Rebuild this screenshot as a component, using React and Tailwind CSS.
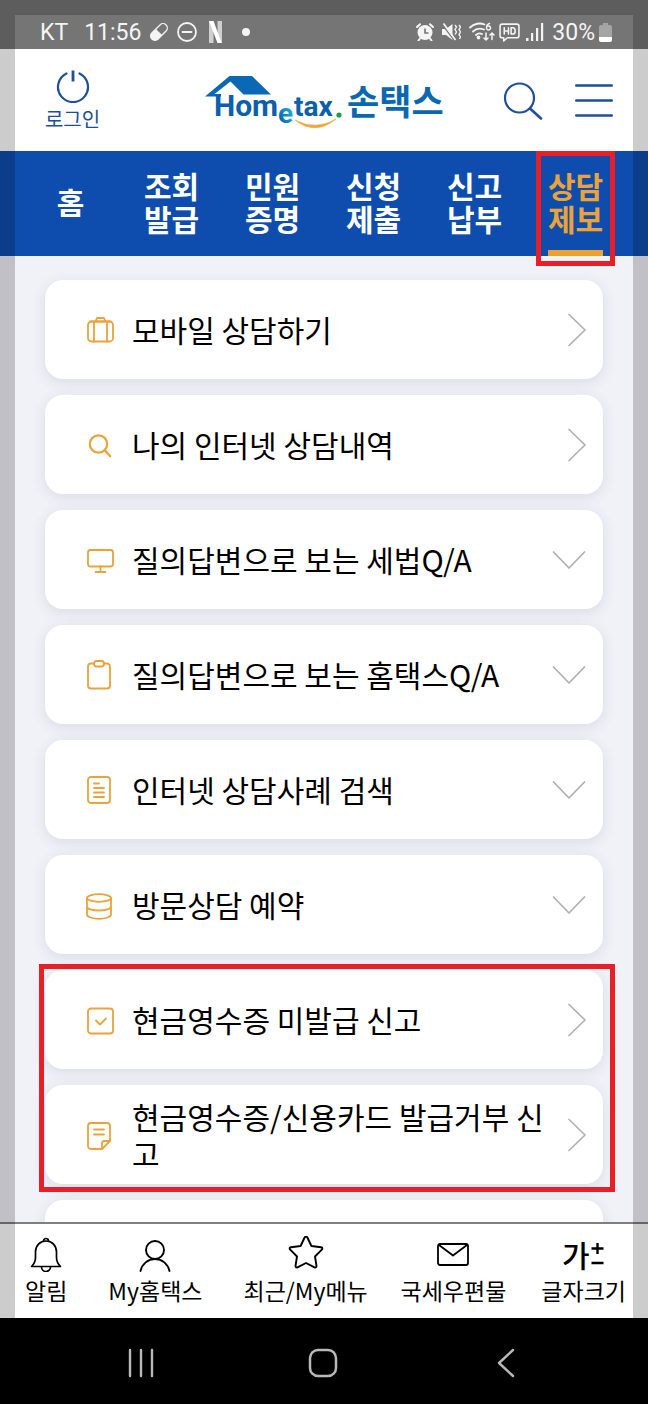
import React, { useState } from 'react'

const iconProps = {
  fill: 'none',
  stroke: 'currentColor',
  strokeLinecap: 'round',
  strokeLinejoin: 'round',
  'aria-hidden': true
}

const MenuIcon = ({ children }) => (
  <svg viewBox="0 0 28 30" strokeWidth="1.8" {...iconProps} className="w-7 h-[30px] flex-shrink-0 text-[#e9a33a]">
    {children}
  </svg>
)

const icons = {
  briefcase: (
    <>
      <rect x="2" y="6.5" width="25" height="20" rx="3.5" />
      <path d="M8 6.5v20M21 6.5v20M4 6.5h21M9.5 6.5L11 3h7l1.500 3.500" />
    </>
  ),
  search: (
    <>
      <circle cx="12.5" cy="14" r="8.7" strokeWidth="2.2" />
      <path d="M19 20.5l5 5.500" strokeWidth="2.4" />
    </>
  ),
  monitor: (
    <>
      <rect x="2" y="5" width="25" height="16.5" rx="2.5" />
      <path d="M14.5 21.5V27M9.500 27h10" />
    </>
  ),
  clipboard: (
    <>
      <path d="M7.5 3.500H5a3 3 0 0 0-3 3v19a3 3 0 0 0 3 3h16a3 3 0 0 0 3-3v-19a3 3 0 0 0-3-3h-2.500" />
      <rect x="8" y="1" width="10" height="5.5" rx="2.5" />
    </>
  ),
  document: (
    <>
      <rect x="2" y="2" width="22" height="26" rx="3" />
      <path d="M8 8.500h5M8 13h10M8 17.500h10M8 22h10" />
    </>
  ),
  database: (
    <>
      <ellipse cx="13" cy="8" rx="12" ry="3.8" />
      <path d="M1 8v16.500c0 2.300 5 4.300 12 4.300s12-2 12-4.300V8M1 16.500c0 2.200 5 4 12 4s12-1.800 12-4" />
    </>
  ),
  check: (
    <>
      <rect x="2" y="3.5" width="25" height="25" rx="3" />
      <path d="M10 15.500l4 4 6-6" />
    </>
  ),
  note: (
    <>
      <path d="M16 29H5a3 3 0 0 1-3-3V6a3 3 0 0 1 3-3h16a3 3 0 0 1 3 3v15z" />
      <path d="M24 21h-5.500a2.500 2.500 0 0 0-2.500 2.500V29M8 9.500h10M8 14.500h10" />
    </>
  )
}

const tabs = ['홈', '조회\n발급', '민원\n증명', '신청\n제출', '신고\n납부', '상담\n제보']

const menuItems = [
  { icon: 'briefcase', label: '모바일 상담하기', type: 'link' },
  { icon: 'search', label: '나의 인터넷 상담내역', type: 'link' },
  { icon: 'monitor', label: '질의답변으로 보는 세법Q/A', type: 'group' },
  { icon: 'clipboard', label: '질의답변으로 보는 홈택스Q/A', type: 'group' },
  { icon: 'document', label: '인터넷 상담사례 검색', type: 'group' },
  { icon: 'database', label: '방문상담 예약', type: 'group' }
]

const reportItems = [
  { icon: 'check', label: '현금영수증 미발급 신고', type: 'link' },
  { icon: 'note', label: '현금영수증/신용카드 발급거부 신고', type: 'link' }
]

const StatusBar = () => (
  <div className="flex items-center justify-between h-[49px] pt-[15px] pl-10 pr-9 bg-[#757575] text-[#f4f4f4] font-[Roboto,sans-serif] text-[23px] leading-none flex-shrink-0">
    <div className="flex items-center">
      <span>KT</span>
      <span className="ml-4">11:56</span>
      <svg viewBox="0 0 20 20" className="ml-2 w-5 h-5" aria-hidden="true">
        <g transform="rotate(-45 10 10)">
          <rect x="0" y="5.7" width="20" height="8.6" rx="4.3" fill="none" stroke="currentColor" strokeWidth="1.3" />
          <path d="M10 5.300H4.500a4.700 4.700 0 0 0 0 9.400H10z" fill="currentColor" />
        </g>
      </svg>
      <svg viewBox="0 0 20 20" strokeWidth="1.8" {...iconProps} className="ml-2 w-5 h-5">
        <circle cx="10" cy="10" r="9" />
        <path d="M5.500 10h9" />
      </svg>
      <svg viewBox="0 0 13 22" className="ml-3 w-[13px] h-[22px]" aria-hidden="true">
        <path d="M0 0h4.500v22l-4.500.5zM8.500 0H13v22.500L8.500 22z" fill="#cfcfcf" />
        <path d="M0 0h4.500L13 22.500 8.500 22z" fill="#fff" />
      </svg>
      <span className="ml-5 w-2 h-2 rounded-full bg-[#f4f4f4]" />
    </div>
    <div className="flex items-center">
      <svg viewBox="0 0 18 18" className="w-[18px] h-[18px]" aria-hidden="true">
        <circle cx="9" cy="9.5" r="7.5" fill="currentColor" />
        <path d="M1 4l3-2.800M17 4l-3-2.800M4 15.500l-1.500 2M14 15.500l1.500 2" stroke="currentColor" strokeWidth="2" strokeLinecap="round" />
        <path d="M9 5.500V10h3.500" fill="none" stroke="#757575" strokeWidth="1.6" />
      </svg>
      <svg viewBox="0 0 19 18" className="ml-2 w-[19px] h-[18px]" aria-hidden="true">
        <path d="M0 6h4l6.500-5v16L4 12H0z" fill="currentColor" />
        <path d="M0 1l12 16" stroke="#757575" strokeWidth="1.4" />
        <path d="M1.500.5l12 16.500" stroke="currentColor" strokeWidth="1.8" />
        <path d="M13 2l1.500 2L13 6.500 14.500 9 13 11.500M17 2l1.500 2L17 6.500 18.500 9 17 11.500l1.500 2.500-1 2" fill="none" stroke="currentColor" strokeWidth="1.4" />
      </svg>
      <svg viewBox="0 0 26 20" strokeWidth="1.8" {...iconProps} className="ml-2 w-[26px] h-5">
        <path d="M1 5.500C5 1.500 11 .5 15.500 2.500M4 9.500c3-3 7-3.500 11-2M7 13c1.500-1.500 4-2 6-1" />
        <circle cx="9.5" cy="15.5" r="1" fill="currentColor" />
        <path d="M20.500 1.500c-2 .5-3 2-3 4.500a2 2 0 1 0 1.500-2" strokeWidth="1.5" />
        <path d="M17 11v7M15 16l2 2 2-2M23 17.500V11M21 13l2-2 2 2" strokeWidth="1.5" />
      </svg>
      <svg viewBox="0 0 20 18" strokeWidth="1.5" {...iconProps} className="ml-1 w-[21px] h-[19px]">
        <path d="M3 1h14a2 2 0 0 1 2 2v9a2 2 0 0 1-2 2H8l-3.500 3V14H3a2 2 0 0 1-2-2V3a2 2 0 0 1 2-2z" />
        <path d="M5 4.500v6M9 4.500v6M5 7.500h4M11.500 4.500v6H13c3.200 0 3.200-6 0-6z" />
      </svg>
      <svg viewBox="0 0 18 18" className="ml-1.5 w-[18px] h-[18px]" fill="currentColor" aria-hidden="true">
        <path d="M0 15h2.500v3H0zM5 10h2.200v8H5zM10 5h2.200v13H10zM15 0h2.200v18H15z" />
      </svg>
      <span className="ml-2">30%</span>
      <svg viewBox="0 0 13 19" className="ml-1 w-[13px] h-[19px]" aria-hidden="true">
        <path d="M4 0h5v2h2a2 2 0 0 1 2 2v10H0V4a2 2 0 0 1 2-2h2z" fill="#a5a5a5" />
        <path d="M0 14h13v3a2 2 0 0 1-2 2H2a2 2 0 0 1-2-2z" fill="#fff" />
      </svg>
    </div>
  </div>
)

const Logo = () => (
  <svg viewBox="0 -4 250 62" className="w-[250px] h-[62px]" role="img" aria-label="Hometax 손택스">
    <defs>
      <linearGradient id="logo-e" x1="0" y1="1" x2="1" y2="0">
        <stop offset="0.2" stopColor="#0a63ae" />
        <stop offset="0.8" stopColor="#1cb4dc" />
      </linearGradient>
    </defs>
    <path d="M5 23.500L29.500 3H52l19 18.500H43.500L30.500 8.500 14.500 21H21v2.500z" fill="#0a68b4" />
    <g fontFamily="Roboto, sans-serif" fontWeight="700" fill="#0a60ac">
      <text x="14" y="43" fontSize="30">Hom</text>
      <text x="78" y="50" fontSize="28" fill="url(#logo-e)">e</text>
      <text x="94" y="43" fontSize="28">tax</text>
    </g>
    <circle cx="139" cy="42" r="2.6" fill="#1f9c48" />
    <path d="M95 47q20 16 41-1-20 12-41 1z" fill="#eaa63c" stroke="#eaa63c" strokeWidth="0.6" />
    <text x="147" y="42" fontFamily="'Noto Sans CJK KR', sans-serif" fontWeight="700" fontSize="35" fill="#0a68b0">손택스</text>
  </svg>
)

const Header = () => (
  <header className="flex items-center h-[102px] pl-[45px] pr-[35px] bg-white text-[#1e4f99] flex-shrink-0">
    <button className="flex flex-col items-center gap-1 w-[55px] whitespace-nowrap">
      <svg viewBox="0 0 34 34" strokeWidth="2.2" {...iconProps} className="w-[34px] h-[34px]">
        <path d="M10.500 4.500a15 15 0 1 0 13 0" />
        <path d="M17 1.500v11" strokeWidth="2.8" strokeLinecap="butt" />
      </svg>
      <span className="text-xl leading-6">로그인</span>
    </button>
    <a href="#home" className="ml-[100px]">
      <Logo />
    </a>
    <div className="ml-auto flex items-center gap-8">
      <button aria-label="검색">
        <svg viewBox="0 0 40 40" strokeWidth="2.2" {...iconProps} className="w-10 h-10">
          <circle cx="16.5" cy="18" r="14.5" />
          <path d="M27 28.500l11 10" strokeWidth="2.6" />
        </svg>
      </button>
      <button aria-label="전체메뉴">
        <svg viewBox="0 0 38 34" strokeWidth="2.4" {...iconProps} className="w-[38px] h-[34px]">
          <path d="M1.200 2.500h35.600M1.200 17.500h35.600M1.200 32.500h35.600" />
        </svg>
      </button>
    </div>
  </header>
)

const Tabs = ({ active, onChange }) => (
  <nav className="grid grid-cols-6 h-[105px] pl-5 pr-[22px] bg-[#0e4dae] flex-shrink-0">
    {tabs.map((label, index) => (
      <button
        key={label}
        onClick={() => onChange(index)}
        className={`relative flex items-center justify-center pb-1 whitespace-pre-line text-3xl leading-[33px] font-bold ${
          active === index ? 'text-[#e9a33a]' : 'text-white'
        }`}
      >
        {label}
        {active === index && (
          <span className="absolute bottom-0 w-[55px] h-1.5 bg-[#eba22f]" />
        )}
        {index === 5 && (
          <span className="absolute z-10 top-0 inset-x-[11px] -bottom-2.5 border-5 border-[#e81f27]" />
        )}
      </button>
    ))}
  </nav>
)

const MenuCard = ({ item }) => (
  <li>
    <button className="w-full min-h-[99px] pl-[41px] pr-[17px] flex items-center rounded-[18px] bg-white shadow-[0_3px_14px_rgba(60,60,90,0.12)] text-left">
      <MenuIcon>{icons[item.icon]}</MenuIcon>
      <span className="ml-[18px] flex-1 text-3xl leading-[37px] break-all text-black">{item.label}</span>
      <svg viewBox="0 0 34 34" strokeWidth="1.7" {...iconProps} className="w-[34px] h-[34px] flex-shrink-0 text-[#b0b0b0]">
        {item.type === 'link' ? <path d="M17 1.500L33 17 17 32.500" /> : <path d="M1.500 9L17 25 32.500 9" />}
      </svg>
    </button>
  </li>
)

const BottomItem = ({ label, children }) => (
  <a href="#menu" className="flex flex-col items-center whitespace-nowrap">
    <span className="h-9 flex items-center justify-center">{children}</span>
    <span className="text-[23px] leading-9">{label}</span>
  </a>
)

const BottomBar = () => (
  <footer className="flex justify-between border-t-2 border-[#7f7f7f] bg-white pt-3 pb-2.5 pl-[25px] pr-[22px] text-black flex-shrink-0">
    <div className="flex gap-[41px]">
      <BottomItem label="알림">
        <svg viewBox="0 0 32 36" strokeWidth="1.7" {...iconProps} className="w-8 h-9">
          <path d="M1.500 30.500h29c-3-3-4-5-4-9V16c0-6.500-4.500-11-10.500-11S5.500 9.500 5.500 16v5.500c0 4-1 6-4 9z" />
          <path d="M13.500 5a2.500 2.500 0 0 1 5 0M11.500 31a4.500 4.500 0 0 0 9 0" />
        </svg>
      </BottomItem>
      <BottomItem label="My홈택스">
        <svg viewBox="0 0 32 36" strokeWidth="1.9" {...iconProps} className="w-8 h-9">
          <circle cx="16" cy="14" r="9" />
          <path d="M1.500 35C3 28 9 23 16 23s13 5 14.500 12" />
        </svg>
      </BottomItem>
      <BottomItem label="최근/My메뉴">
        <svg viewBox="0 0 36 36" strokeWidth="1.9" {...iconProps} className="w-9 h-9">
          <path d="M16.600 1.500q1.400-2 2.800 0l4 8.500 9.600 1.200q2.200.6.8 2.500L27 20.500l1.500 9.300q0 2.200-2 1.500L18 27l-8.500 4.300q-2 .7-2-1.500L9 20.500l-6.800-6.800q-1.400-1.900.8-2.500l9.600-1.200z" />
        </svg>
      </BottomItem>
    </div>
    <div className="flex gap-[35px]">
      <BottomItem label="국세우편물">
        <svg viewBox="0 0 32 36" strokeWidth="1.8" {...iconProps} className="w-8 h-9">
          <rect x="1" y="8" width="30" height="21" rx="2" />
          <path d="M2 9l14 10.500L30 9" />
        </svg>
      </BottomItem>
      <BottomItem label="글자크기">
        <span className="text-3xl leading-9 font-medium">가</span>
        <svg viewBox="0 0 16 36" strokeWidth="2.4" {...iconProps} strokeLinecap="butt" className="w-4 h-9">
          <path d="M2.500 12.500h12M8.500 7v11M2.500 27h12" />
        </svg>
      </BottomItem>
    </div>
  </footer>
)

const SystemNav = () => (
  <div className="grid grid-cols-3 items-center justify-items-center h-[86px] pt-1 pl-[50px] pr-[51px] bg-black text-[#b9b9b9] flex-shrink-0">
    <button aria-label="최근 앱">
      <svg viewBox="0 0 28 30" strokeWidth="2.4" {...iconProps} className="w-7 h-[30px]">
        <path d="M3 2v26M14 2v26M25 2v26" />
      </svg>
    </button>
    <button aria-label="홈 화면">
      <svg viewBox="0 0 30 30" strokeWidth="2.5" {...iconProps} className="w-[30px] h-[30px]">
        <rect x="2" y="2" width="26" height="26" rx="8" />
      </svg>
    </button>
    <button aria-label="뒤로">
      <svg viewBox="0 0 18 30" strokeWidth="2.4" {...iconProps} className="w-[18px] h-[30px]">
        <path d="M16 2L2 15l14 13" />
      </svg>
    </button>
  </div>
)

const App = () => {
  const [activeTab, setActiveTab] = useState(5)

  return (
    <div className="h-screen flex flex-col bg-black font-['Noto_Sans_CJK_KR',sans-serif]">
      <div className="relative flex-1 min-h-0 flex flex-col">
        <StatusBar />
        <Header />
        <Tabs active={activeTab} onChange={setActiveTab} />

        {/* Menu list, scrolls under the bottom bar */}
        <main className="flex-1 min-h-0 overflow-y-auto [scrollbar-width:none] bg-[#f1f1f8] pt-6 px-[45px]">
          <ul className="flex flex-col gap-4">
            {menuItems.map((item) => (
              <MenuCard key={item.label} item={item} />
            ))}
          </ul>
          <div className="relative mt-4">
            <ul className="flex flex-col gap-4">
              {reportItems.map((item) => (
                <MenuCard key={item.label} item={item} />
              ))}
            </ul>
            <div className="absolute -top-1.5 -bottom-2 -left-1.5 -right-3 border-5 border-[#e81f27] pointer-events-none" />
          </div>
          <div className="mt-4 h-[99px] rounded-[18px] bg-white shadow-[0_3px_14px_rgba(60,60,90,0.12)]" />
        </main>

        <BottomBar />

        {/* Dimmed edge around the app */}
        <div className="absolute inset-0 border-[15px] border-b-0 border-black/20 pointer-events-none" />
      </div>
      <SystemNav />
    </div>
  )
}

export default App
